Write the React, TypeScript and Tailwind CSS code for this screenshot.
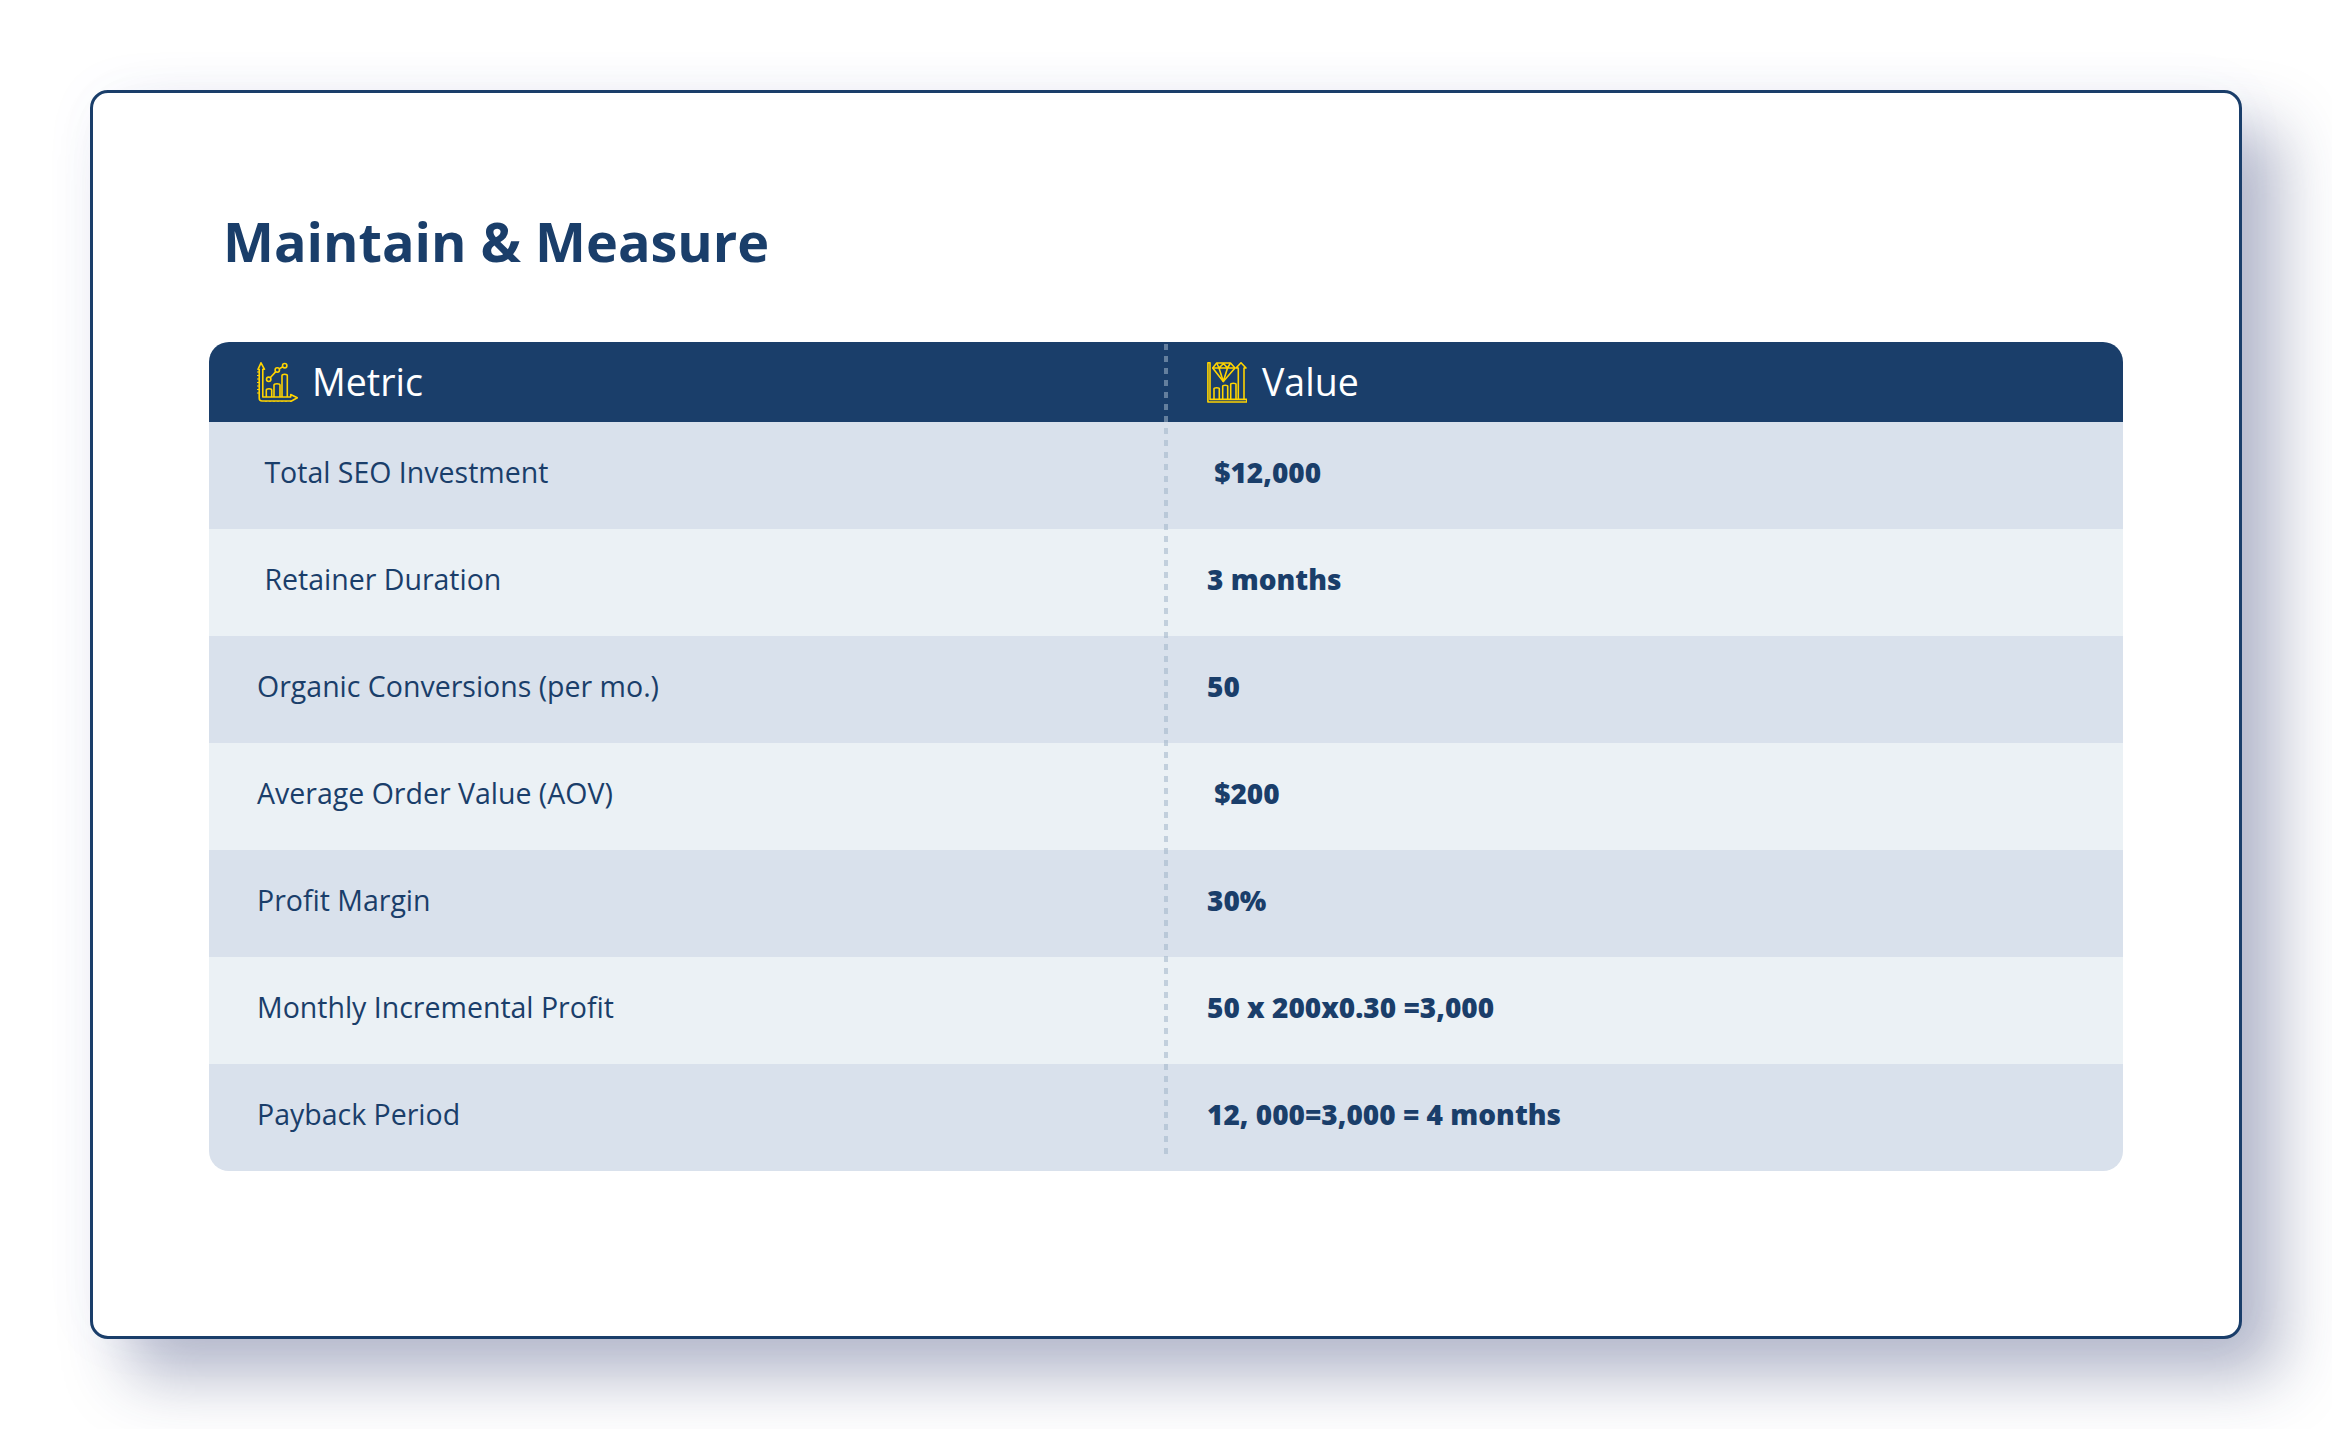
const rows = [
  { metric: "\u00a0Total SEO Investment", value: "\u00a0$12,000", shade: true },
  { metric: "\u00a0Retainer Duration", value: "3 months", shade: false },
  { metric: "Organic Conversions (per mo.)", value: "50", shade: true },
  { metric: "Average Order Value (AOV)", value: "\u00a0$200", shade: false },
  { metric: "Profit Margin", value: "30%", shade: true },
  { metric: "Monthly Incremental Profit", value: "50 x 200x0.30 =3,000", shade: false },
  { metric: "Payback Period", value: "12, 000=3,000 = 4 months", shade: true },
];

function ChartIcon() {
  return (
    <svg viewBox="0 0 41 40" className="w-[41px] h-10 shrink-0" fill="none" stroke="#ffd400" strokeWidth="1.6" strokeLinejoin="round">
      <path d="M4 .8 L1 7.300 L2.200 7.300 L2.200 36 Q2.200 39 5 39 L33.700 39 L33.700 39.500 L40.300 35.700 L33.700 32.500 L33.700 35 L5.800 35 L5.800 7.300 L7.500 7.300 Z" />
      <path d="M0 10h2M0 13.500h2M0 17h2M0 20.500h2M0 24h2M0 27.500h2M0 31h2M9 39v1M13 39v1M17 39v1M21 39v1M25 39v1M29 39v1" strokeWidth="1" />
      <path d="M9.300 35V28Q9.300 26.700 12 26.700Q14.700 26.700 14.700 28V35" />
      <path d="M17 35V23Q17 21.700 20 21.700Q23 21.700 23 23V35" />
      <path d="M25 35V13.500Q25 12.300 27.700 12.300Q30.300 12.300 30.300 13.500V35" />
      <circle cx="11.700" cy="17.300" r="2.200" />
      <circle cx="20.300" cy="8" r="2.200" />
      <circle cx="27.700" cy="3.700" r="2.200" />
      <path d="M13.200 15.700 L18.800 9.600M22.200 6.900 L25.800 4.800" />
    </svg>
  );
}

function DiamondIcon() {
  return (
    <svg viewBox="0 0 40 41" className="w-10 h-[41px] shrink-0" fill="none" stroke="#ffd400" strokeWidth="1.600" strokeLinejoin="round">
      <path d="M.9 .8H3V37.400H39.700V40H.9Z" />
      <path d="M5.700 6L9.700 1H23.500L28 6L16.300 19.500Z" />
      <path d="M5.700 6H28M9.700 1L12 6L16.300 19.500L20.500 6L23.500 1M12 6L16.500 1.500L20.500 6" />
      <path d="M7 37.400V26.700Q7 25.700 9.700 25.700Q12.300 25.700 12.300 26.700V37.400" />
      <path d="M15.700 37.400V24.300Q15.700 23.300 18.200 23.300Q20.700 23.300 20.700 24.300V37.400" />
      <path d="M23.700 37.400V22.300Q23.700 21.300 26.300 21.300Q29 21.300 29 22.300V37.400" />
      <path d="M31.300 37.400V6H29L34 .8L39 6H37V37.400" />
    </svg>
  );
}

export default function App() {
  return (
    <div className="w-[2332px] h-[1429px] bg-white p-[90px] overflow-hidden font-['Open_Sans',sans-serif] text-[#1a3e6a]">
      <div className="w-[2152px] h-[1249px] bg-white border-[3px] border-[#1a3e6a] rounded-[18px] pt-[111px] pl-[116px] shadow-[38px_38px_64px_rgba(37,49,103,0.34),0_0_60px_rgba(70,90,220,0.04)]">
        <h1 className="text-[54px] leading-[74px] font-bold pl-[14px] mb-[64px]">Maintain &amp; Measure</h1>
        <div className="relative w-[1914px] rounded-[20px] overflow-hidden">
          <div className="grid grid-cols-[957px_957px] h-[80px] bg-[#1a3e6a] text-white text-[37.500px] font-medium items-center">
            <div className="flex items-center gap-[14px] pl-[48px]">
              <ChartIcon />
              <span>Metric</span>
            </div>
            <div className="flex items-center gap-[15px] pl-[41px]">
              <DiamondIcon />
              <span>Value</span>
            </div>
          </div>
          {rows.map((row) => (
            <div key={row.metric} className={`grid grid-cols-[957px_957px] h-[107px] text-[28.500px] pb-[7px] items-center ${row.shade ? "bg-[#d9e1ec]" : "bg-[#ebf1f5]"}`}>
              <div className="pl-[48px]">{row.metric}</div>
              <div className="pl-[41px] text-[28px] font-extrabold">{row.value}</div>
            </div>
          ))}
          <div className="absolute left-[955px] top-[2px] bottom-[14px] w-[4px] bg-[repeating-linear-gradient(to_bottom,rgba(160,180,200,0.55)_0px,rgba(160,180,200,0.55)_6px,transparent_6px,transparent_12px)]" />
        </div>
      </div>
    </div>
  );
}
